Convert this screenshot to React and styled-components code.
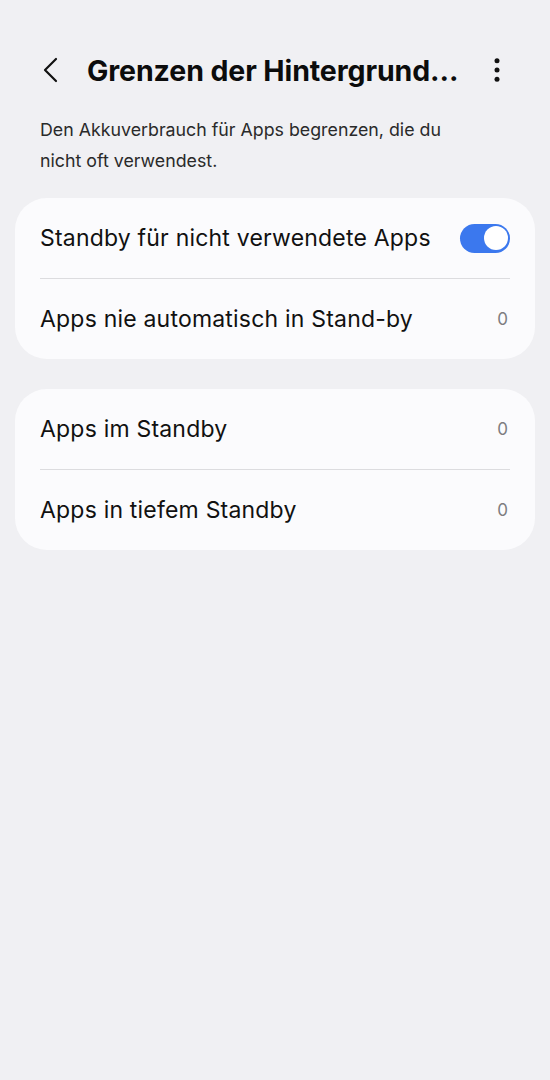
import React from "react";
import styled, { createGlobalStyle } from "styled-components";

const GlobalStyle = createGlobalStyle`
  html, body {
    margin: 0;
    padding: 0;
    background: #f0f0f3;
  }
  body {
    font-family: "Inter", "Roboto", sans-serif;
    color: #111;
  }
`;

const Page = styled.div`
  width: 550px;
  min-height: 1080px;
  background: #f0f0f3;
  display: flex;
  flex-direction: column;
`;

const TopBar = styled.div`
  display: flex;
  align-items: center;
  height: 60px;
  margin-top: 40px;
  padding: 0 43px 0 36px;
`;

const BackButton = styled.div`
  width: 28px;
  height: 40px;
  display: flex;
  align-items: center;
  justify-content: center;
  margin-right: 23px;
`;

const Title = styled.h1`
  flex: 1;
  margin: 0;
  font-size: 28.5px;
  font-weight: 700;
  letter-spacing: -0.1px;
  color: #0c0c0c;
  white-space: nowrap;
`;

const MoreButton = styled.div`
  width: 20px;
  height: 40px;
  display: flex;
  align-items: center;
  justify-content: center;
`;

const Description = styled.p`
  margin: 14px 90px 22px 40px;
  font-size: 17.8px;
  line-height: 31px;
  color: #2a2a2a;
`;

const Card = styled.div`
  margin: 0 15px 30px 15px;
  background: #fbfbfd;
  border-radius: 32px;
  padding: 0 25px;
`;

const Row = styled.div`
  display: flex;
  align-items: center;
  justify-content: space-between;
  height: 80px;
  border-top: ${(p) => (p.divided ? "1px solid #dcdcdf" : "none")};
`;

const Label = styled.span`
  font-size: 23px;
  letter-spacing: 0.2px;
  color: #111;
`;

const Value = styled.span`
  font-size: 17px;
  color: #7d7d80;
  margin-right: 2px;
`;

const Toggle = styled.div`
  width: 50px;
  height: 29px;
  border-radius: 15px;
  background: ${(p) => (p.on ? "#3b78ee" : "#cfcfd2")};
  display: flex;
  align-items: center;
  justify-content: ${(p) => (p.on ? "flex-end" : "flex-start")};
  padding: 0 2.5px;
  box-sizing: border-box;
`;

const Knob = styled.div`
  width: 24px;
  height: 24px;
  border-radius: 50%;
  background: #ffffff;
`;

const groups = [
  [
    { label: "Standby für nicht verwendete Apps", toggle: true },
    { label: "Apps nie automatisch in Stand-by", value: "0" },
  ],
  [
    { label: "Apps im Standby", value: "0" },
    { label: "Apps in tiefem Standby", value: "0" },
  ],
];

const App = () => {
  return (
    <Page>
      <GlobalStyle />
      <TopBar>
        <BackButton>
          <svg width="16" height="26" viewBox="0 0 16 26">
            <path
              d="M14 2 L3 13 L14 24"
              fill="none"
              stroke="#111"
              strokeWidth="2.2"
              strokeLinecap="round"
              strokeLinejoin="round"
            />
          </svg>
        </BackButton>
        <Title>Grenzen der Hintergrund...</Title>
        <MoreButton>
          <svg width="6" height="24" viewBox="0 0 6 24">
            <circle cx="3" cy="2.8" r="2.5" fill="#111" />
            <circle cx="3" cy="12" r="2.5" fill="#111" />
            <circle cx="3" cy="21.2" r="2.5" fill="#111" />
          </svg>
        </MoreButton>
      </TopBar>
      <Description>
        Den Akkuverbrauch für Apps begrenzen, die du nicht oft verwendest.
      </Description>
      {groups.map((rows, gi) => (
        <Card key={gi}>
          {rows.map((row, ri) => (
            <Row key={ri} divided={ri > 0}>
              <Label>{row.label}</Label>
              {row.toggle ? (
                <Toggle on>
                  <Knob />
                </Toggle>
              ) : (
                <Value>{row.value}</Value>
              )}
            </Row>
          ))}
        </Card>
      ))}
    </Page>
  );
};

export default App;
